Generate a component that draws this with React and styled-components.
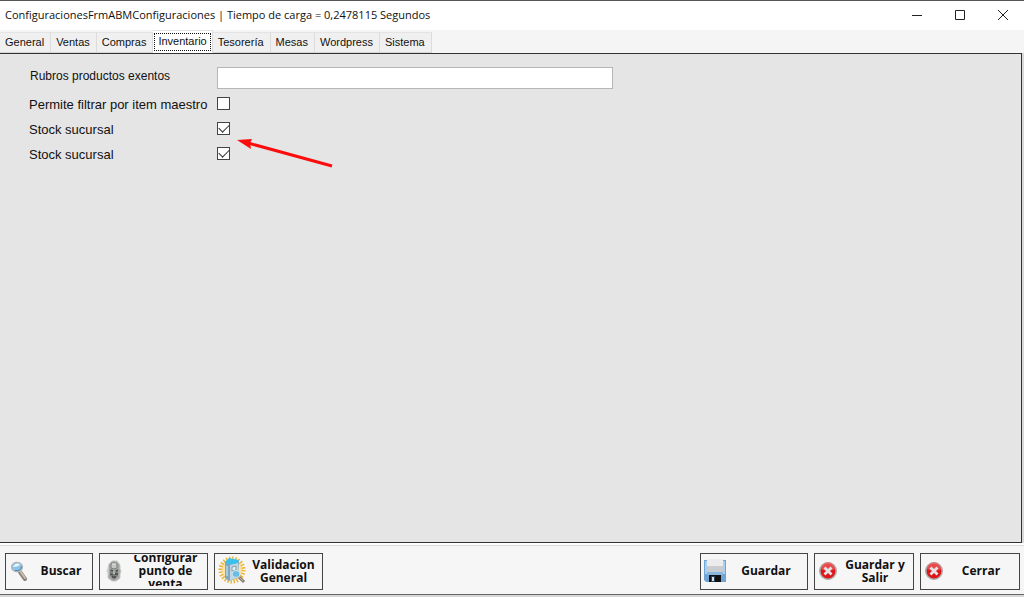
import React, { useState } from "react";
import styled, { createGlobalStyle, css } from "styled-components";

const GlobalStyle = createGlobalStyle`
  * { box-sizing: border-box; }
  body { margin: 0; background: #d8d8d8; color: #111; font-family: "Liberation Sans", Arial, sans-serif; }
`;

const Window = styled.div`
  display: flex;
  flex-direction: column;
  min-height: 100vh;
  border-top: 1px solid #555;
  padding-bottom: 2px;
`;

const TitleBar = styled.header`
  display: flex;
  align-items: center;
  justify-content: space-between;
  height: 29px;
  padding: 0 0 1px 5px;
  background: #fff;
`;

const Title = styled.h1`
  margin: 0;
  font: 400 11px/16px "Open Sans", "Segoe UI", sans-serif;
  white-space: nowrap;
`;

const WindowControls = styled.div`
  display: flex;
`;

const WindowButton = styled.button`
  display: grid;
  place-items: center;
  width: 43px;
  height: 28px;
  padding: 0;
  border: 0;
  background: transparent;
`;

const TabStrip = styled.div`
  display: flex;
  align-items: flex-end;
  height: 23px;
  background: #f5f5f5;
`;

const Tab = styled.button`
  height: 21px;
  padding: 0 6px 2px 5px;
  border: 0;
  border-right: 1px solid #dcdcdc;
  border-top: 1px solid #e4e4e4;
  border-bottom: 1px solid #d4d4d4;
  background: #f0f0f0;
  color: #111;
  font: 11px/18px "Liberation Sans", Arial, sans-serif;
  white-space: nowrap;
  ${(p) => p.$selected && css`
    height: 23px;
    padding: 2px 1px;
    border-bottom-color: #fff;
    background: #fff;
  `}
`;

const FocusFrame = styled.span`
  display: block;
  height: 18px;
  padding: 0 3px;
  border: 1px dotted #111;
  line-height: 14px;
`;

const Panel = styled.main`
  position: relative;
  flex: 1;
  margin-right: 2px;
  padding: 12px 28px;
  border: solid #333;
  border-width: 1px 1px 1px 0;
  background: #e5e5e5;
`;

const Field = styled.div`
  display: grid;
  grid-template-columns: 188px minmax(0, 396px);
  align-items: center;
  height: 25px;
  padding-left: 1px;
`;

const Label = styled.label`
  padding-top: 2px;
  font: 13px/16px "Liberation Sans", Arial, sans-serif;
  ${(p) => p.$small && css`
    align-self: start;
    padding-left: 1px;
    font-size: 12px;
  `}
`;

const TextInput = styled.input`
  width: 100%;
  height: 22px;
  padding: 2px 4px;
  border: 1px solid #b4b6ba;
  background: #fff;
  font: 12px/16px "Liberation Sans", Arial, sans-serif;
`;

const CheckBox = styled.input`
  appearance: none;
  display: grid;
  place-items: center;
  width: 13px;
  height: 13px;
  margin: 0;
  border: 1px solid #444;
  background: #fff;
  &:checked::before {
    content: "";
    width: 9px;
    height: 5px;
    margin-top: -3px;
    border: solid #333;
    border-width: 0 0 1px 1px;
    transform: rotate(-45deg);
  }
`;

const Pointer = styled.svg`
  position: absolute;
  left: 236px;
  top: 82px;
  pointer-events: none;
`;

const Footer = styled.footer`
  display: flex;
  align-items: flex-start;
  justify-content: space-between;
  height: 52px;
  padding: 10px 4px 4px 5px;
  border-bottom: 1px solid #666;
  background: linear-gradient(#fff 2px, #d9d9d9 2px, #d9d9d9 3px, #f6f6f6 3px);
`;

const Group = styled.div`
  display: flex;
  gap: ${(p) => p.$gap}px;
`;

const Action = styled.button`
  display: flex;
  align-items: center;
  width: ${(p) => p.$width}px;
  height: 37px;
  padding: 1px 3px 3px;
  border: 1px solid #444;
  background: #f6f6f6;
  color: #111;
  font: 700 12px/13px "Open Sans", Tahoma, sans-serif;
  svg { flex: none; }
`;

const Caption = styled.span`
  display: flex;
  flex: 1;
  align-items: center;
  justify-content: center;
  height: 31px;
  padding-left: 2px;
  overflow: hidden;
  text-align: center;
`;

const Magnifier = () => (
  <svg width="22" height="24" viewBox="0 0 22 24" aria-hidden="true">
    <path d="M11 13l5 7" stroke="#85807c" strokeWidth="4" strokeLinecap="round" />
    <path d="M11 12l5 7" stroke="#cdbca8" strokeWidth="2" strokeLinecap="round" />
    <ellipse cx="8" cy="8" rx="5.5" ry="4.6" fill="#8cc3e8" stroke="#b5b5b5" strokeWidth="1.3" />
    <path d="M4 8q2-5 7-3q-1 3-7 3z" fill="#e6f7ff" />
    <path d="M6 11.5q6 1 6.5-4" stroke="#3d82b9" fill="none" />
  </svg>
);

const Device = () => (
  <svg width="22" height="24" viewBox="0 0 22 24" aria-hidden="true">
    <path d="M6 5l3-3h5l3 4v4l1 2-1 3v4l-4 3H9l-4-3v-4l-1-3 1-3z" fill="#a6a8a6" stroke="#c6c8c6" />
    <path d="M8 5q3-3 6 0v4q-3 2-6 0z" fill="#c4c6c4" stroke="#7c7f7d" />
    <path d="M7 10l4 2 4-2v7l-4 4-4-4z" fill="#7e827f" />
    <path d="M8 11l2 1M13 12l2-1M7 15l3 1M12 15h3M9 18h4" stroke="#454846" strokeWidth="1.3" />
    <path d="M9 5h4M11 12v3M5 8v8" stroke="#e2e4e2" />
  </svg>
);

const Validation = () => (
  <svg width="28" height="30" viewBox="0 0 28 30" aria-hidden="true">
    <circle cx="14" cy="14" r="11" fill="#fbe5ad" />
    <circle cx="14" cy="14" r="11.5" fill="none" stroke="#edb239" strokeWidth="4" strokeDasharray="1.4 1.6" />
    <path d="M7 6l4-3 10 2-1 17-9 3-4-3z" fill="#7fa9c0" />
    <path d="M7 6l4-4 10 2-2 4-7 1z" fill="#39c0ec" />
    <path d="M12 9l8-2v14l-8 4z" fill="#c3d6df" />
    <path d="M14 11l4-1v4l-4 1z" fill="#eaf2f5" stroke="#7d9eae" />
    <path d="M9 10v10" stroke="#a9cbdc" strokeWidth="2" />
    <ellipse cx="18" cy="18" rx="4" ry="3.5" fill="#68bce5" stroke="#d2e6ef" />
    <path d="M21 21l5 5" stroke="#827d78" strokeWidth="3" />
    <path d="M21 21l4 4" stroke="#c3b6a5" />
  </svg>
);

const Disk = () => (
  <svg width="22" height="24" viewBox="0 0 22 24" aria-hidden="true">
    <path d="M0 1h22v22H2l-2-2z" fill="#6fa4d4" />
    <path d="M1 2h3v13H1zM18 2h3v13h-3z" fill="#a8cfee" />
    <path d="M3 0h16v13H3z" fill="#ececec" />
    <path d="M3 7h16v6H3z" fill="#c9cdd0" />
    <path d="M3 13h16v3H3z" fill="#88b8e0" />
    <path d="M5 16h12v7H5z" fill="#111" />
    <path d="M7 17h4v6H7z" fill="#28425c" />
    <path d="M8 18h2v4H8z" fill="#ddd" />
  </svg>
);

const Stop = () => (
  <svg width="20" height="20" viewBox="0 0 20 20" aria-hidden="true">
    <circle cx="10" cy="10" r="8.2" fill="#df1519" stroke="#a9a9a9" strokeWidth="1.6" />
    <path d="M3 8a7 7 0 0 1 14 0q-7 4-14 0" fill="#ef6668" opacity=".65" />
    <path d="M6.5 6.5l7 7M13.5 6.5l-7 7" stroke="#e4e4e4" strokeWidth="2.8" />
  </svg>
);

const tabs = ["General", "Ventas", "Compras", "Inventario", "Tesorería", "Mesas", "Wordpress", "Sistema"];

const options = [
  { id: "filtrar", label: "Permite filtrar por item maestro", checked: false },
  { id: "stock1", label: "Stock sucursal", checked: true },
  { id: "stock2", label: "Stock sucursal", checked: true },
];

const RubrosField = styled(Field)`
  height: 24px;
  margin-bottom: 1px;
`;

const windowIcons = [
  { name: "Minimizar", path: "M1 6.5h10" },
  { name: "Maximizar", path: "M1.5 1.5h9v9h-9z" },
  { name: "Cerrar ventana", path: "M1 1l10 10M11 1L1 11" },
];

export default function App() {
  const [selected, setSelected] = useState("Inventario");
  return (
    <Window>
      <GlobalStyle />
      <TitleBar>
        <Title>ConfiguracionesFrmABMConfiguraciones | Tiempo de carga = 0,2478115 Segundos</Title>
        <WindowControls>
          {windowIcons.map((icon) => (
            <WindowButton key={icon.name} aria-label={icon.name}>
              <svg width="12" height="12" viewBox="0 0 12 12"><path d={icon.path} fill="none" stroke="#222" /></svg>
            </WindowButton>
          ))}
        </WindowControls>
      </TitleBar>
      <TabStrip role="tablist">
        {tabs.map((name) => (
          <Tab key={name} role="tab" aria-selected={name === selected} $selected={name === selected} onClick={() => setSelected(name)}>
            {name === selected ? <FocusFrame>{name}</FocusFrame> : name}
          </Tab>
        ))}
      </TabStrip>
      <Panel>
        <RubrosField>
          <Label $small htmlFor="rubros">Rubros productos exentos</Label>
          <TextInput id="rubros" />
        </RubrosField>
        {options.map((o) => (
          <Field key={o.id}>
            <Label htmlFor={o.id}>{o.label}</Label>
            <CheckBox id={o.id} type="checkbox" defaultChecked={o.checked} />
          </Field>
        ))}
        <Pointer width="98" height="34" viewBox="0 0 98 34" aria-hidden="true">
          <path d="M12 7L96 30" stroke="#fb0d0d" strokeWidth="3" />
          <path d="M1 4l15-1-2 4 1 6z" fill="#fb0d0d" />
        </Pointer>
      </Panel>
      <Footer>
        <Group $gap={6}>
          <Action $width={88}><Magnifier /><Caption>Buscar</Caption></Action>
          <Action $width={109}><Device /><Caption>Configurar punto de venta</Caption></Action>
          <Action $width={109}><Validation /><Caption>Validacion General</Caption></Action>
        </Group>
        <Group $gap={6}>
          <Action $width={108}><Disk /><Caption>Guardar</Caption></Action>
          <Action $width={100}><Stop /><Caption>Guardar y Salir</Caption></Action>
          <Action $width={100}><Stop /><Caption>Cerrar</Caption></Action>
        </Group>
      </Footer>
    </Window>
  );
}
